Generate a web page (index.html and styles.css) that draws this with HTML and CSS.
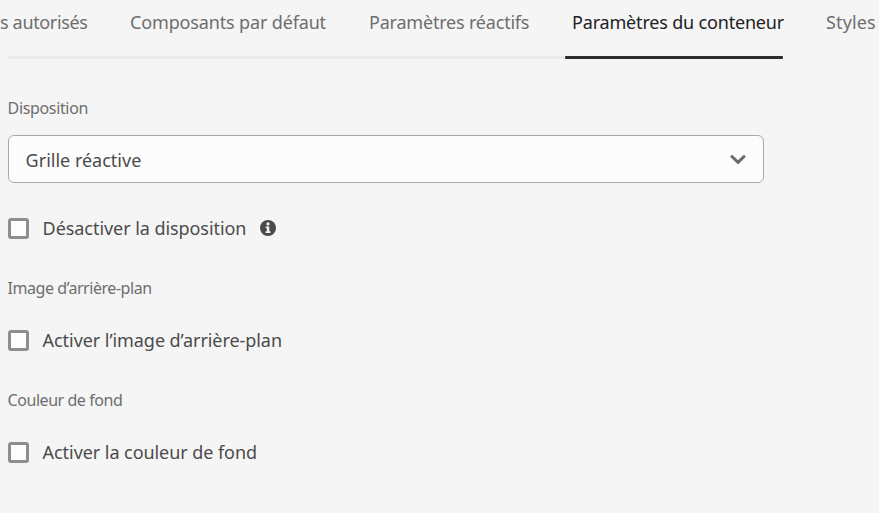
FILE: index.html
```html
<!DOCTYPE html>
<html lang="fr">
<head>
<meta charset="utf-8">
<title>Paramètres du conteneur</title>
<link rel="stylesheet" href="styles.css">
</head>
<body>
<nav class="tabs">
  <a class="tab tab-allowed"><span>s autorisés</span></a>
  <a class="tab tab-default"><span>Composants par défaut</span></a>
  <a class="tab tab-responsive"><span>Paramètres réactifs</span></a>
  <a class="tab tab-container selected"><span>Paramètres du conteneur</span></a>
  <a class="tab tab-styles"><span>Styles</span></a>
</nav>
<div class="track"><div class="indicator"></div></div>
<main class="panel">
  <h3 class="label label-layout">Disposition</h3>
  <div class="select">
    <span class="value">Grille réactive</span>
    <svg class="chevron" width="16" height="11" viewBox="0 0 16 11"><path d="M2 2.5 8 8.4l6-5.9" fill="none" stroke="#6b6b6b" stroke-width="3" stroke-linecap="round" stroke-linejoin="round"/></svg>
  </div>
  <label class="check check-layout"><span class="box"></span><span class="text">Désactiver la disposition</span>
    <svg class="info" width="16" height="16" viewBox="0 0 16 16"><circle cx="8" cy="8" r="8" fill="#4b4b4b"/><circle cx="8" cy="3.9" r="1.6" fill="#f5f5f5"/><path d="M5.7 6.5h3.6v4.7h1.2V13H5.6v-1.8h1.3V8.2H5.7z" fill="#f5f5f5"/></svg>
  </label>
  <h3 class="label label-image">Image d’arrière-plan</h3>
  <label class="check"><span class="box"></span><span class="text">Activer l’image d’arrière-plan</span></label>
  <h3 class="label label-color">Couleur de fond</h3>
  <label class="check"><span class="box"></span><span class="text">Activer la couleur de fond</span></label>
</main>
</body>
</html>
```
FILE: styles.css
```css
* { box-sizing: border-box; }
body {
  margin: 0;
  height: 513px;
  overflow: hidden;
  background: #f5f5f5;
  color: #4b4b4b;
  font: 18px/24px "Noto Sans", "Liberation Sans", sans-serif;
}
.tabs { display: flex; height: 56px; padding-top: 10px; }
.tab { flex: none; white-space: nowrap; color: #6e6e6e; }
.tab-allowed { width: 130px; letter-spacing: -0.34px; }
.tab-default { width: 239px; letter-spacing: -0.15px; }
.tab-responsive { width: 203px; letter-spacing: -0.2px; }
.tab-container { width: 254px; letter-spacing: -0.18px; }
.tab-styles { letter-spacing: 0.15px; }
.selected { color: #222; }
.track { height: 3px; width: 775px; margin-left: 8px; background: #eaeaea; }
.indicator { width: 218px; height: 3px; margin-left: auto; border-radius: 1px; background: #2c2c2c; }
.panel { padding-left: 7.6px; }
.label {
  height: 20px; margin: 0;
  font-size: 16px; line-height: 20px; font-weight: 400; letter-spacing: -0.45px;
  color: #6e6e6e; white-space: nowrap;
}
.label-layout { margin-top: 39px; letter-spacing: -0.35px; }
.select {
  display: flex; align-items: center; justify-content: space-between;
  width: 756px; height: 48px; margin-top: 17px; padding: 0 17px;
  border: 1px solid #a9a9a9; border-radius: 6px; background: #fcfcfc;
}
.value { padding-top: 2px; }
.check { display: flex; align-items: center; height: 24px; margin-top: 30px; }
.check-layout { margin-top: 33px; margin-bottom: 38px; }
.box { width: 21px; height: 21px; margin-right: 14px; border: 3px solid #8e8e8e; border-radius: 3px; background: #fdfdfd; }
.text { white-space: nowrap; letter-spacing: -0.06px; }
.info { margin-left: 13.5px; }
.label-color { margin-top: 38px; }
```
